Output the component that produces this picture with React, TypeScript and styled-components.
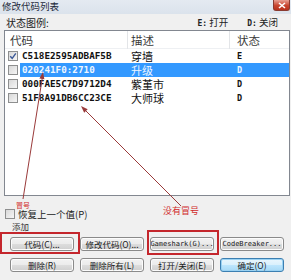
import React from 'react';
import styled, {createGlobalStyle} from 'styled-components';

const GlobalStyle = createGlobalStyle`
  html, body {
    margin: 0;
    padding: 0;
    background: #f0f0f0;
  }
  body {
    font-family: 'Noto Sans CJK SC', 'DejaVu Sans', sans-serif;
    color: #111;
  }
`

type Code = { code: string; desc: string; state: string; on: boolean; selected?: boolean }

const codes: Code[] = [
    {code: 'C518E2595ADBAF5B', desc: '穿墙', state: 'E', on: true},
    {code: '020241F0:2710', desc: '升级', state: 'D', on: false, selected: true},
    {code: '000FAE5C7D9712D4', desc: '紫堇市', state: 'D', on: false},
    {code: '51F8A91DB6CC23CE', desc: '大师球', state: 'D', on: false},
]

const buttons = [
    {label: '代码(C)...', latin: false},
    {label: '修改代码(O)...', latin: false},
    {label: 'Gameshark(G)...', latin: true},
    {label: 'CodeBreaker...', latin: true},
    {label: '删除(R)', latin: false},
    {label: '删除所有(L)', latin: false},
    {label: '打开/关闭(E)', latin: false},
    {label: '确定(O)', latin: false, primary: true},
]

const CheckBox = ({checked}: { checked?: boolean }) => (
    <Box>
        {checked && (
            <svg width="8" height="8" viewBox="0 0 8 8">
                <polyline points="1.2,4.2 3.2,6.3 6.8,1.4" fill="none" stroke="#3d5a98" strokeWidth="1.4"/>
            </svg>
        )}
    </Box>
)

export default function App() {
    return (
        <>
            <GlobalStyle/>
            <Window>
                <TitleBar>
                    <Title>修改代码列表</Title>
                    <CloseButton>
                        <svg width="8" height="7" viewBox="0 0 8 7">
                            <path d="M1 1 L7 6 M7 1 L1 6" stroke="#fff" strokeWidth="1.6"/>
                        </svg>
                    </CloseButton>
                </TitleBar>

                <LegendRow>
                    <span>状态图例:</span>
                    <Legend>
                        <LegendItem><b>E:</b> 打开</LegendItem>
                        <LegendItem><b>D:</b> 关闭</LegendItem>
                    </Legend>
                </LegendRow>

                <ListBox>
                    <HeaderRow>
                        <HeaderCell $pad={5} $line>代码</HeaderCell>
                        <HeaderCell $pad={3} $line>描述</HeaderCell>
                        <HeaderCell $pad={7}>状态</HeaderCell>
                    </HeaderRow>
                    {codes.map(c => (
                        <Row key={c.code}>
                            <CheckCell><CheckBox checked={c.on}/></CheckCell>
                            <RowBody $selected={c.selected}>
                                <CodeText>{c.code}</CodeText>
                                <DescText>{c.desc}</DescText>
                                <StateText>{c.state}</StateText>
                            </RowBody>
                        </Row>
                    ))}
                </ListBox>

                <OptionRow>
                    <CheckBox/>
                    <span>恢复上一个值(P)</span>
                </OptionRow>

                <GroupLabel>添加</GroupLabel>

                <ButtonGrid>
                    {buttons.map(b => (
                        <Button key={b.label} $latin={b.latin} $primary={b.primary}>{b.label}</Button>
                    ))}
                </ButtonGrid>

                {/* annotations drawn over the dialog */}
                <Overlay width={291} height={280} viewBox="0 0 291 280">
                    <line x1={23} y1={199} x2={42.6} y2={76} stroke="#9a3a3a" strokeWidth={1}/>
                    <polygon points="43,72 44.4,79.3 39.4,78.5" fill="#9a3a3a"/>
                    <line x1={181} y1={206} x2={84} y2={109} stroke="#9a3a3a" strokeWidth={1}/>
                    <polygon points="81,106 87.7,109.2 84.2,112.7" fill="#9a3a3a"/>
                </Overlay>
                <RedBox $x={0} $y={232} $w={80} $h={22}/>
                <RedBox $x={147} $y={230} $w={72} $h={25}/>
                <Note $x={16} $y={202} $size={7}>冒号</Note>
                <Note $x={163} $y={206} $size={9}>没有冒号</Note>
            </Window>
        </>
    );
}

const Window = styled.div`
  position: relative;
  width: 291px;
  height: 280px;
  overflow: hidden;
  background: #f0f0f0;
  display: flex;
  flex-direction: column;
`

const TitleBar = styled.div`
  height: 14px;
  display: flex;
  align-items: flex-start;
  padding-left: 2px;
  background: linear-gradient(#e4eaf1, #dbe3ec);
`

const Title = styled.span`
  font-size: 9.5px;
  line-height: 13px;
  color: #1e2a3a;
`

const CloseButton = styled.div`
  margin-left: auto;
  margin-right: 1px;
  width: 17px;
  height: 11px;
  display: flex;
  align-items: center;
  justify-content: center;
  border: 1px solid #8a3a30;
  border-top: none;
  border-radius: 0 0 3px 3px;
  background: linear-gradient(#e8a093, #c8452f 55%, #b8321d);
  box-sizing: border-box;
`

const LegendRow = styled.div`
  height: 16px;
  display: flex;
  align-items: center;
  padding: 0 13px 0 6px;
  font-size: 10px;
  color: #222;
`

const Legend = styled.div`
  margin-left: auto;
  display: flex;
  gap: 19px;
`

const LegendItem = styled.span`
  font-size: 9.5px;

  b {
    font-family: 'DejaVu Sans Mono', monospace;
    font-size: 8px;
  }
`

const ListBox = styled.div`
  margin: 0 1px 0 4px;
  height: 166px;
  box-sizing: border-box;
  border: 1px solid #828790;
  background: #fff;
`

const HeaderRow = styled.div`
  height: 18px;
  display: grid;
  grid-template-columns: 123px 102px 1fr;
  border-bottom: 1px solid #eef0f3;
  box-sizing: border-box;
`

const HeaderCell = styled.div<{ $pad: number; $line?: boolean }>`
  padding-left: ${p => p.$pad}px;
  font-size: 11.5px;
  line-height: 18px;
  color: #3a3a3a;
  border-right: ${p => (p.$line ? '1px solid #e3e5e8' : 'none')};
`

const Row = styled.div`
  height: 14px;
  display: flex;
`

const CheckCell = styled.div`
  width: 15px;
  display: flex;
  align-items: center;
  padding-left: 3px;
  box-sizing: border-box;
`

const Box = styled.span`
  width: 10px;
  height: 10px;
  box-sizing: border-box;
  border: 1px solid #8e8f8f;
  background: linear-gradient(135deg, #d8d8d8, #f6f6f6);
  display: inline-flex;
  align-items: center;
  justify-content: center;
  flex: none;
`

const RowBody = styled.div<{ $selected?: boolean }>`
  flex: 1;
  display: grid;
  grid-template-columns: 107px 102px 1fr;
  align-items: center;
  background: ${p => (p.$selected ? '#3399ff' : 'transparent')};
  color: ${p => (p.$selected ? '#eef6ff' : '#111')};
`

const CodeText = styled.span`
  padding-left: 2px;
  font-family: 'DejaVu Sans Mono', monospace;
  font-weight: bold;
  font-size: 9.3px;
  line-height: 14px;
`

const DescText = styled.span`
  padding-left: 4px;
  font-size: 11px;
  line-height: 14px;
`

const StateText = styled.span`
  padding-left: 8px;
  font-family: 'DejaVu Sans Mono', monospace;
  font-weight: bold;
  font-size: 8.5px;
  line-height: 14px;
`

const OptionRow = styled.div`
  margin-top: 13px;
  height: 10px;
  padding-left: 5px;
  display: flex;
  align-items: center;
  gap: 3px;
  font-size: 9.5px;
  line-height: 10px;
  color: #222;
`

const GroupLabel = styled.div`
  margin-top: 2px;
  height: 10px;
  padding-left: 12px;
  font-size: 8.5px;
  line-height: 10px;
  color: #333;
`

const ButtonGrid = styled.div`
  margin-top: 6px;
  padding-left: 10px;
  display: grid;
  grid-template-columns: repeat(4, 64px);
  grid-auto-rows: 14px;
  column-gap: 6px;
  row-gap: 7px;
`

const Button = styled.div<{ $latin?: boolean; $primary?: boolean }>`
  box-sizing: border-box;
  display: flex;
  align-items: center;
  justify-content: center;
  white-space: nowrap;
  border: 1px solid ${p => (p.$primary ? '#3c7fb1' : '#8a8a8a')};
  border-radius: 3px;
  background: ${p => (p.$primary
          ? 'linear-gradient(#eaf6fd, #d9f0fc 50%, #bee6fd 50%, #a7d9f5)'
          : 'linear-gradient(#f2f2f2, #ebebeb 50%, #dddddd 50%, #cfcfcf)')};
  box-shadow: ${p => (p.$primary ? 'inset 0 0 0 1px #9ad2f3' : 'inset 0 0 0 1px #fcfcfc')};
  font-family: ${p => (p.$latin ? "'DejaVu Sans Mono', monospace" : "'Noto Sans CJK SC', sans-serif")};
  font-size: ${p => (p.$latin ? '7px' : '8.5px')};
  color: #1a1a1a;
  overflow: hidden;
`

const Overlay = styled.svg`
  position: absolute;
  left: 0;
  top: 0;
  pointer-events: none;
`

const RedBox = styled.div<{ $x: number; $y: number; $w: number; $h: number }>`
  position: absolute;
  left: ${p => p.$x}px;
  top: ${p => p.$y}px;
  width: ${p => p.$w}px;
  height: ${p => p.$h}px;
  box-sizing: border-box;
  border: 2px solid #c4262c;
`

const Note = styled.span<{ $x: number; $y: number; $size: number }>`
  position: absolute;
  left: ${p => p.$x}px;
  top: ${p => p.$y}px;
  font-size: ${p => p.$size}px;
  line-height: 1;
  color: #d02a2a;
  white-space: nowrap;
`
